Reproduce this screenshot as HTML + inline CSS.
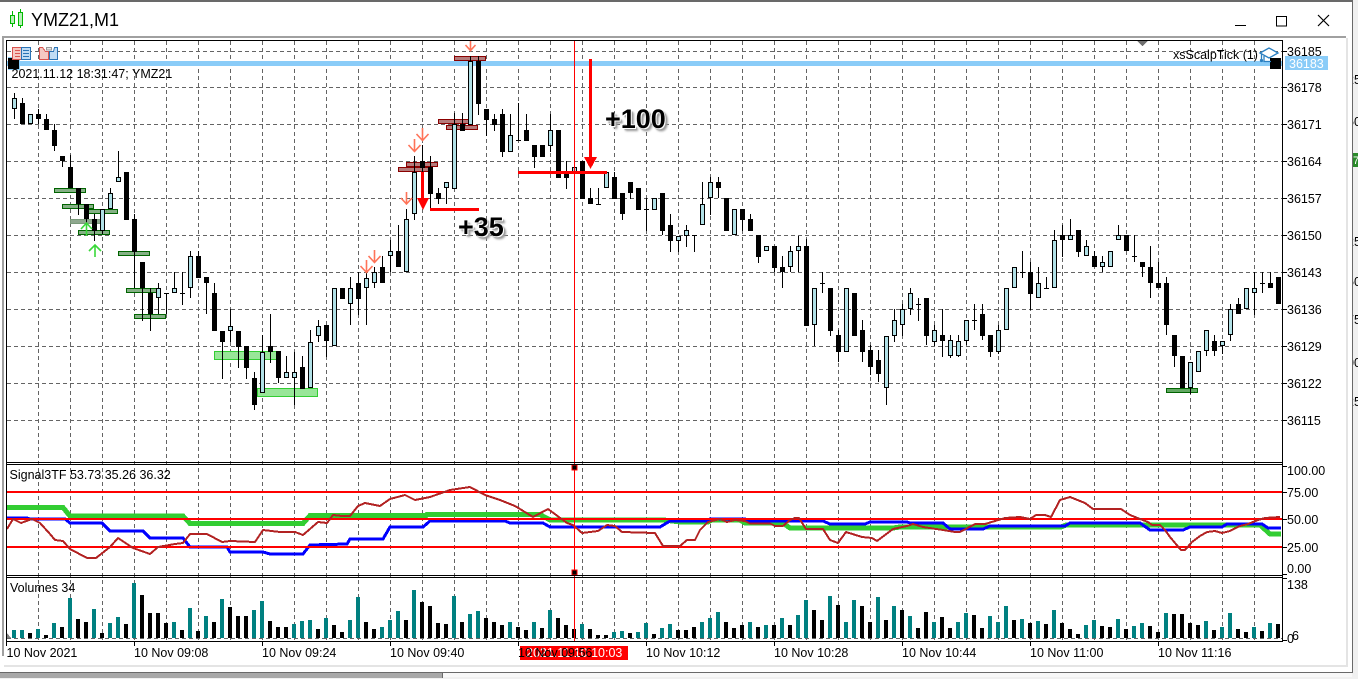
<!DOCTYPE html>
<html><head><meta charset="utf-8"><title>YMZ21,M1</title>
<style>
html,body{margin:0;padding:0;background:#f0f0f0;width:1358px;height:679px;overflow:hidden}
svg{position:absolute;left:0;top:0}
text{font-family:"Liberation Sans",sans-serif;font-size:12.5px;fill:#000}
.big{position:absolute;font:bold 27px/30px "Liberation Sans",sans-serif;color:#000;text-shadow:1px 1px 0 #fff,-1px -1px 0 #fff,3px 3px 2px #999,2px 2px 1px #aaa;white-space:nowrap}
</style></head><body>
<svg width="1358" height="679" viewBox="0 0 1358 679" shape-rendering="crispEdges">
<rect width="1358" height="679" fill="#f0f0f0"/>
<!-- neighbouring window fragments -->
<g fill="#333"><text x="1347" y="84">25</text><text x="1347" y="126">50</text><text x="1347" y="246">25</text><text x="1347" y="286">50</text><text x="1347" y="324">75</text><text x="1347" y="367">00</text><text x="1347" y="406">25</text></g>
<rect x="1353" y="153" width="5" height="14" fill="#2a8a2a"/>
<text x="1353" y="164" style="fill:#fff;font-size:11px">7</text>
<!-- window -->
<rect x="0" y="0" width="1352" height="672" fill="#fff"/>
<rect x="0" y="0" width="1352" height="2" fill="#696969"/>
<rect x="1352" y="0" width="1" height="673" fill="#696969"/>
<rect x="2" y="36" width="1344" height="2" fill="#a0a0a0"/>
<rect x="2" y="36" width="2" height="620" fill="#a0a0a0"/>
<rect x="1346" y="38" width="2" height="628" fill="#e4e4e4"/>
<rect x="4" y="665" width="1344" height="2" fill="#e4e4e4"/>
<rect x="0" y="672" width="1353" height="1" fill="#696969"/>
<rect x="0" y="673" width="442" height="5" fill="#a8a8a8"/>
<rect x="442" y="673" width="1" height="5" fill="#696969"/>
<rect x="443" y="673" width="909" height="4" fill="#f8f8f8"/>
<!-- title bar -->
<g fill="none" stroke="#00b800" stroke-width="1">
<path d="M12.5 11V15M12.5 23V27M20.5 9V12M20.5 25V28"/>
<rect x="10.5" y="15.5" width="4" height="8" fill="#b8f0b8"/>
<rect x="18.5" y="12.5" width="4" height="13" fill="#b8f0b8"/>
</g>
<text x="31" y="26" style="font-size:18px;fill:#000">YMZ21,M1</text>
<path d="M1235 25.5H1246" stroke="#000" stroke-width="1"/>
<rect x="1276.5" y="16.5" width="10" height="9.5" fill="none" stroke="#000" stroke-width="1"/>
<path d="M1318 15L1329 26M1329 15L1318 26" stroke="#000" stroke-width="1.2" shape-rendering="auto"/>
<!-- grid -->
<path fill="none" stroke="#646464" stroke-width="1" stroke-dasharray="4 3" d="M7 51.5H1282M7 87.5H1282M7 124.5H1282M7 161.5H1282M7 198.5H1282M7 235.5H1282M7 272.5H1282M7 309.5H1282M7 346.5H1282M7 383.5H1282M7 420.5H1282M7 638.5H1282
M38.5 41V640M70.5 41V640M102.5 41V640M134.5 41V640M166.5 41V640M198.5 41V640M230.5 41V640M262.5 41V640M294.5 41V640M326.5 41V640M358.5 41V640M390.5 41V640M422.5 41V640M454.5 41V640M486.5 41V640M518.5 41V640M550.5 41V640M582.5 41V640M614.5 41V640M646.5 41V640M678.5 41V640M710.5 41V640M742.5 41V640M774.5 41V640M806.5 41V640M838.5 41V640M870.5 41V640M902.5 41V640M934.5 41V640M966.5 41V640M998.5 41V640M1030.5 41V640M1062.5 41V640M1094.5 41V640M1126.5 41V640M1158.5 41V640M1190.5 41V640M1222.5 41V640M1254.5 41V640"/>
<!-- zones -->
<g fill="#85b085" stroke="#006400" stroke-width="1">
<rect x="54.5" y="188.5" width="31" height="4"/><rect x="62.5" y="204.5" width="31" height="4"/><rect x="86.5" y="209.5" width="31" height="4"/><rect x="70.5" y="219.5" width="31" height="4" stroke="#7a9a7a" fill="#8fa88f"/><rect x="78.5" y="230.5" width="31" height="4"/><rect x="118.5" y="251.5" width="31" height="4"/><rect x="126.5" y="288.5" width="31" height="4"/><rect x="134.5" y="314.5" width="31" height="4"/>
<rect x="1166.5" y="388.5" width="31" height="4" fill="#62a862"/>
</g>
<g fill="#98e698" stroke="#32cd32" stroke-width="1">
<rect x="214.5" y="351.5" width="64" height="8"/><rect x="257.5" y="388.5" width="60" height="8"/>
</g>
<g fill="#b47c7c" stroke="#8b0000" stroke-width="1">
<rect x="454.5" y="56.5" width="31" height="4"/><rect x="438.5" y="119.5" width="31" height="4"/><rect x="446.5" y="125.5" width="31" height="4"/><rect x="406.5" y="162.5" width="31" height="4"/><rect x="398.5" y="167.5" width="31" height="4"/>
</g>
<!-- blue price line -->
<rect x="7" y="61" width="1275" height="5" fill="#8accf8"/>
<!-- candle wicks -->
<path fill="none" stroke="#000" stroke-width="1" d="M14.5 93V119M22.5 98V124M38.5 109V124M46.5 114V130M54.5 124V151M62.5 156V167M70.5 155V188M78.5 188V215M86.5 204V225M94.5 214V241M102.5 209V234M110.5 188V209M118.5 151V182M134.5 214V288M142.5 262V321M150.5 288V331M158.5 283V314M166.5 293V314M174.5 272V293M182.5 272V305M190.5 251V298M198.5 251V278M206.5 277V314M214.5 283V331M222.5 331V379M230.5 309V342M238.5 331V368M246.5 346V379M254.5 372V410M262.5 335V393M270.5 314V363M278.5 351V383M286.5 356V378M294.5 352V405M302.5 356V389M310.5 330V388M318.5 320V342M326.5 325V357M350.5 277V325M358.5 272V315M366.5 272V325M374.5 267V288M382.5 256V283M390.5 240V272M398.5 225V267M406.5 209V272M414.5 156V220M422.5 145V180M430.5 156V209M438.5 188V204M446.5 182V204M454.5 113V189M462.5 113V131M470.5 56V125M478.5 56V115M486.5 109V136M494.5 114V131M502.5 109V157M510.5 114V152M518.5 103V140M526.5 114V141M534.5 145V168M550.5 114V152M566.5 161V189M574.5 156V199M590.5 188V204M598.5 188V204M614.5 172V199M622.5 193V220M630.5 182V199M646.5 198V231M662.5 193V235M670.5 214V252M678.5 236V252M686.5 225V247M694.5 235V252M702.5 182V225M710.5 177V215M718.5 177V198M742.5 209V231M750.5 214V231M758.5 235V263M774.5 246V272M782.5 256V288M790.5 246V272M798.5 236V272M806.5 239V326M814.5 288V346M822.5 272V293M830.5 288V336M838.5 330V362M862.5 320V362M870.5 345V375M878.5 350V382M886.5 336V405M894.5 309V342M902.5 304V336M910.5 288V315M918.5 298V321M926.5 298V345M934.5 325V346M942.5 309V357M950.5 335V358M958.5 335V357M966.5 320V345M974.5 304V330M982.5 304V340M990.5 335V357M998.5 325V354M1014.5 267V288M1022.5 251V278M1030.5 262V310M1038.5 267V298M1046.5 277V288M1054.5 230V288M1062.5 225V257M1070.5 219V240M1078.5 230V257M1086.5 240V256M1094.5 251V267M1102.5 256V272M1118.5 225V240M1134.5 235V262M1142.5 262V277M1150.5 246V298M1158.5 262V288M1166.5 277V335M1174.5 335V367M1190.5 362V394M1206.5 330V356M1214.5 335V356M1222.5 341V354M1230.5 304V341M1238.5 298V314M1254.5 272V315M1262.5 272V293M1270.5 272V288
M164 293.5h5M180 293.5h5M516 140.5h5M596 204.5h5M644 209.5h5M692 235.5h5M820 283.5h5M916 304.5h5M972 320.5h5M1020 272.5h5M1044 288.5h5M1132 256.5h5M1260 283.5h5"/>
<!-- bear bodies -->
<path fill="#000" d="M20 103h5v21h-5zM36 114h5v5h-5zM44 119h5v11h-5zM52 130h5v16h-5zM60 156h5v5h-5zM68 167h5v21h-5zM76 188h5v16h-5zM84 204h5v15h-5zM92 219h5v12h-5zM124 172h5v48h-5zM132 219h5v33h-5zM140 262h5v26h-5zM148 293h5v21h-5zM196 256h5v22h-5zM204 277h5v6h-5zM212 293h5v38h-5zM220 331h5v11h-5zM236 331h5v16h-5zM244 346h5v22h-5zM252 378h5v27h-5zM268 346h5v6h-5zM276 351h5v27h-5zM300 367h5v22h-5zM324 325h5v16h-5zM340 288h5v11h-5zM356 283h5v16h-5zM380 267h5v16h-5zM396 251h5v16h-5zM420 161h5v7h-5zM428 167h5v27h-5zM436 193h5v6h-5zM460 124h5v7h-5zM476 61h5v43h-5zM484 109h5v11h-5zM492 119h5v6h-5zM500 114h5v38h-5zM524 130h5v11h-5zM532 145h5v12h-5zM540 145h5v12h-5zM556 130h5v48h-5zM564 172h5v6h-5zM580 161h5v38h-5zM588 198h5v6h-5zM612 177h5v22h-5zM620 193h5v21h-5zM628 182h5v11h-5zM636 188h5v22h-5zM660 193h5v38h-5zM668 225h5v16h-5zM716 182h5v6h-5zM724 198h5v33h-5zM740 209h5v11h-5zM748 219h5v12h-5zM756 235h5v22h-5zM772 246h5v22h-5zM780 267h5v5h-5zM804 246h5v80h-5zM828 288h5v43h-5zM836 335h5v17h-5zM852 293h5v43h-5zM860 330h5v22h-5zM868 350h5v17h-5zM876 360h5v14h-5zM924 298h5v38h-5zM940 335h5v6h-5zM980 314h5v22h-5zM988 335h5v17h-5zM1028 272h5v22h-5zM1060 235h5v5h-5zM1076 230h5v22h-5zM1092 256h5v11h-5zM1124 235h5v16h-5zM1140 262h5v5h-5zM1148 267h5v16h-5zM1156 283h5v5h-5zM1164 283h5v42h-5zM1172 335h5v21h-5zM1180 356h5v32h-5zM1212 341h5v10h-5zM1236 304h5v10h-5zM1268 283h5v5h-5zM1276 277h5v27h-5z"/>
<!-- bull bodies -->
<path fill="#b0e0e6" stroke="#000" stroke-width="1" d="M12.5 98.5h4v10h-4zM28.5 114.5h4v9h-4zM100.5 209.5h4v21h-4zM108.5 193.5h4v15h-4zM116.5 177.5h4v4h-4zM156.5 288.5h4v9h-4zM172.5 288.5h4v4h-4zM188.5 256.5h4v31h-4zM228.5 326.5h4v4h-4zM260.5 352.5h4v40h-4zM284.5 372.5h4v5h-4zM292.5 372.5h4v5h-4zM308.5 342.5h4v45h-4zM316.5 326.5h4v9h-4zM332.5 288.5h4v57h-4zM348.5 288.5h4v15h-4zM364.5 278.5h4v9h-4zM372.5 272.5h4v10h-4zM388.5 251.5h4v4h-4zM404.5 219.5h4v52h-4zM412.5 172.5h4v41h-4zM444.5 182.5h4v5h-4zM452.5 124.5h4v64h-4zM468.5 61.5h4v63h-4zM508.5 135.5h4v16h-4zM548.5 130.5h4v15h-4zM572.5 167.5h4v5h-4zM604.5 172.5h4v15h-4zM652.5 198.5h4v11h-4zM676.5 236.5h4v4h-4zM684.5 230.5h4v5h-4zM700.5 204.5h4v20h-4zM708.5 182.5h4v15h-4zM732.5 209.5h4v25h-4zM764.5 246.5h4v4h-4zM788.5 251.5h4v15h-4zM796.5 246.5h4v4h-4zM812.5 288.5h4v36h-4zM844.5 288.5h4v63h-4zM884.5 336.5h4v51h-4zM892.5 320.5h4v15h-4zM900.5 309.5h4v15h-4zM908.5 293.5h4v15h-4zM932.5 330.5h4v11h-4zM948.5 340.5h4v15h-4zM956.5 341.5h4v14h-4zM964.5 320.5h4v20h-4zM996.5 330.5h4v21h-4zM1004.5 288.5h4v41h-4zM1012.5 267.5h4v20h-4zM1036.5 283.5h4v14h-4zM1052.5 240.5h4v47h-4zM1068.5 235.5h4v4h-4zM1084.5 246.5h4v9h-4zM1100.5 262.5h4v4h-4zM1108.5 251.5h4v15h-4zM1116.5 235.5h4v4h-4zM1188.5 362.5h4v25h-4zM1196.5 351.5h4v20h-4zM1204.5 330.5h4v20h-4zM1220.5 341.5h4v4h-4zM1228.5 309.5h4v25h-4zM1244.5 288.5h4v20h-4zM1252.5 288.5h4v4h-4z"/>
<path fill="none" stroke="#000" stroke-width="1" d="M1044 288.5h5"/>
<!-- trade marks: arrows -->
<g fill="none" stroke="#ff7358" stroke-width="1.6" shape-rendering="auto">
<path d="M470.5 40V50M465.5 45L470.5 50.5L475.5 45"/>
<path d="M422.5 128V140M416.5 134L422.5 140.5L428.5 134"/>
<path d="M414.5 139V151M408.5 145L414.5 151.5L420.5 145"/>
<path d="M406.5 192V204M401 198L406.5 204L412 198"/>
<path d="M374.5 250V262M368.5 256L374.5 262.5L380.5 256"/>
<path d="M366.5 260V272M360.5 266L366.5 272.5L372.5 266"/>
</g>
<g fill="none" stroke="#3ad83a" stroke-width="1.6" shape-rendering="auto">
<path d="M86.5 236V224M81 229L86.5 223L92 229"/>
<path d="M95 257V245M89 251L95 245L101 251"/>
</g>
<!-- red drawings -->
<rect x="589" y="59" width="3" height="98" fill="#f00"/>
<path d="M584 157H597L590.500 169z" fill="#f00"/>
<rect x="518" y="171" width="89" height="3" fill="#f00"/>
<rect x="421" y="172" width="3" height="27" fill="#f00"/>
<path d="M417 198H429L423 210z" fill="#f00"/>
<rect x="430" y="208" width="49" height="3" fill="#f00"/>
<!-- signal lines -->
<polyline fill="none" stroke="#32cd32" stroke-width="5" points="7,507.500 63,507.500 70,516 183,516 190,523.500 303,523.500 310,515.500 426,515.500 427,514.500 540,514.500 550,520 664,520 680,522 708,522 712,520 740,520 745,523 783,523 790,528 893,528 900,527 1061,527 1066,525 1260,525 1270,534 1281,534"/>
<polyline fill="none" stroke="#0000ff" stroke-width="3" points="7,518 27,518 30,519 65,519 70,523 102,523 110,531 143,531 150,538 183,538 190,547 227,547 230,552 263,552 270,554 303,554 310,545 347,544 350,539 383,539 390,527 423,527 430,521 505,521 510,523 543,523 550,527 660,527 670,521 708,521 710,519 745,519 748,521 823,521 830,524 865,524 870,522 907,522 910,523 943,523 950,529 983,529 990,526 1065,526 1070,523 1140,523 1150,530 1183,530 1190,527 1222,527 1227,524 1262,524 1268,528 1281,528"/>
<g fill="#f00"><rect x="7" y="491" width="1275" height="2"/><rect x="7" y="518" width="1275" height="2"/><rect x="7" y="546" width="1275" height="2"/></g>
<polyline fill="none" stroke="#b22222" stroke-width="2" points="7,529 13,519 21,523 32,519 40,523 50,534 55,540 63,541 70,549 87,558 96,558 110,547 118,538 133,548 150,554 158,547 175,544 183,543 190,534 207,534 222,542 230,541 255,542 263,530 280,532 295,532 303,535 318,522 327,523 333,515 342,516 350,516 358,506 365,503 380,506 390,499 405,495 415,500 430,497 450,490 470,487 485,495 500,500 515,506 520,509 533,517 548,509 567,523 573,525 582,533 598,531 607,525 615,526 622,532 655,533 663,546 680,546 687,540 695,540 700,530 708,522 720,519 727,522 735,520 745,521 750,523.500 770,523.500 775,526 783,526 790,520 795,518 799,518 806,529 823,529 830,540 838,543 846,532 862,537 872,538 877,541 893,529 907,526 913,524 923,527 943,530 955,532 960,532 975,524 985,524 1005,518 1020,517 1030,519 1036,515 1045,515 1051,517 1060,500 1070,497 1085,503 1093,509 1121,509 1130,515 1140,519 1148,522 1152,525 1160,525 1165,530 1170,537 1181,550 1185,550 1192,542 1200,536 1207,532 1215,531 1222,533 1230,531 1240,526 1248,524 1258,520 1265,518 1280,517"/>
<!-- volumes -->
<path fill="none" stroke="#008080" stroke-width="4" d="M14 630V638M22 630V638M38 629V638M54 623V638M70 598V638M94 609V638M110 623V638M118 617V638M134 583V638M174 622V638M190 608V638M206 616V638M222 599V638M254 610V638M262 601V638M294 624V638M302 621V638M310 620V638M326 618V638M350 620V638M358 597V638M382 627V638M390 620V638M398 611V638M414 590V638M454 596V638M470 614V638M478 611V638M510 622V638M534 622V638M550 610V638M582 624V638M614 632V638M622 631V638M638 632V638M646 623V638M662 628V638M670 624V638M702 622V638M710 618V638M718 612V638M750 622V638M766 625V638M782 618V638M798 615V638M806 600V638M830 596V638M846 622V638M854 600V638M878 597V638M894 606V638M910 616V638M934 622V638M958 622V638M966 613V638M990 616V638M998 622V638M1006 606V638M1022 619V638M1038 621V638M1054 610V638M1086 625V638M1094 620V638M1118 619V638M1134 626V638M1142 623V638M1166 613V638M1206 621V638M1222 627V638M1230 613V638M1254 627V638M1270 623V638"/>
<path fill="none" stroke="#000" stroke-width="4" d="M30 633V638M46 635V638M62 627V638M78 619V638M86 622V638M102 633V638M126 624V638M142 595V638M150 613V638M158 613V638M166 623V638M182 630V638M198 631V638M214 622V638M230 607V638M238 616V638M246 616V638M270 621V638M278 627V638M286 627V638M318 629V638M334 625V638M342 632V638M366 622V638M374 629V638M406 620V638M422 602V638M430 606V638M438 623V638M446 624V638M462 622V638M486 618V638M494 622V638M502 625V638M518 627V638M526 630V638M542 628V638M558 618V638M566 625V638M574 629V638M590 629V638M598 635V638M606 635V638M630 633V638M654 634V638M678 630V638M686 630V638M694 627V638M726 622V638M734 628V638M742 625V638M758 627V638M774 625V638M790 625V638M814 610V638M822 620V638M838 605V638M862 606V638M870 622V638M886 620V638M902 610V638M918 628V638M926 612V638M942 617V638M950 628V638M974 615V638M982 628V638M1014 620V638M1030 623V638M1046 624V638M1062 623V638M1070 629V638M1078 634V638M1102 626V638M1110 627V638M1126 629V638M1150 626V638M1158 632V638M1174 614V638M1182 614V638M1190 623V638M1198 625V638M1214 630V638M1238 629V638M1246 632V638M1262 631V638M1278 624V638"/>
<path d="M7 633L11 638H7z" fill="#808080"/>
<!-- crosshair -->
<rect x="574" y="41" width="1" height="600" fill="#f00"/>
<rect x="572" y="465" width="5" height="5" fill="#000" stroke="#f00" stroke-width="1"/>
<rect x="572" y="570" width="5" height="5" fill="#000" stroke="#f00" stroke-width="1"/>
<!-- chart borders -->
<g fill="#000">
<rect x="6" y="40" width="1277" height="1"/><rect x="6" y="40" width="1" height="602"/><rect x="1282" y="40" width="1" height="602"/>
<rect x="6" y="462" width="1277" height="1"/><rect x="6" y="464" width="1277" height="1"/>
<rect x="6" y="575" width="1277" height="1"/><rect x="6" y="577" width="1277" height="1"/>
<rect x="6" y="641" width="1277" height="1"/>
</g>
<path d="M1137 41H1148L1142.500 46z" fill="#707070"/>
<!-- end squares -->
<rect x="8" y="57" width="12" height="13" fill="#8accf8"/><rect x="8" y="58" width="11" height="11" fill="#000"/>
<rect x="1270" y="58" width="11" height="11" fill="#000"/>
<!-- top-left icons -->
<rect x="12.500" y="47.500" width="9" height="12" fill="#f6c8c2" stroke="#d9534f"/>
<rect x="21.500" y="47.500" width="9" height="12" fill="#c0dcf4" stroke="#2a73b5"/>
<path d="M15 50.500h5M15 53.500h5M15 56.500h5" stroke="#d9534f"/><path d="M23 50.500h6M23 53.500h6M23 56.500h6" stroke="#2a73b5"/>
<path d="M39.500 47.500h3l3 4h3v8h-9z" fill="#f6c8c2" stroke="#d9534f"/>
<path d="M57.500 47.500h-3l-1 4h-4v8h8z" fill="#c0dcf4" stroke="#2a73b5"/>
<rect x="46.500" y="47.500" width="5" height="2.500" fill="#e8e8e8" stroke="#999"/>
<!-- cap icon -->
<g shape-rendering="auto" fill="none" stroke="#2a7fc1" stroke-width="1.3">
<path d="M1260 53L1269 48L1278 53L1269 58z" fill="#fff"/>
<path d="M1264 56V61.500H1271M1261.500 54V60"/>
<circle cx="1261.500" cy="60.500" r="1" fill="#2a7fc1"/>
</g>
<!-- text labels -->
<text x="11.500" y="78">2021.11.12 18:31:47; YMZ21</text>
<text x="9.500" y="479">Signal3TF 53.73 35.26 36.32</text>
<text x="10" y="592">Volumes 34</text>
<text x="1173" y="59">xsScalpTick (1)</text>
<!-- y axis -->
<path stroke="#000" stroke-width="1" d="M1283 51.500h4M1283 87.500h4M1283 124.500h4M1283 161.500h4M1283 198.500h4M1283 235.500h4M1283 272.500h4M1283 309.500h4M1283 346.500h4M1283 383.500h4M1283 420.500h4M1283 466.500h4M1283 492.500h4M1283 519.500h4M1283 547.500h4M1283 574.500h4M1283 578.500h4M1283 640.500h4"/>
<text x="1287" y="56">36185</text><text x="1287" y="92">36178</text><text x="1287" y="129">36171</text><text x="1287" y="166">36164</text><text x="1287" y="203">36157</text><text x="1287" y="240">36150</text><text x="1287" y="277">36143</text><text x="1287" y="314">36136</text><text x="1287" y="351">36129</text><text x="1287" y="388">36122</text><text x="1287" y="425">36115</text>
<rect x="1285" y="56" width="43" height="14" fill="#8accf8"/>
<text x="1289" y="68" style="fill:#fff">36183</text>
<text x="1287" y="475">100.00</text><text x="1287" y="497">75.00</text><text x="1287" y="524">50.00</text><text x="1287" y="552">25.00</text><text x="1287" y="573">0.00</text>
<text x="1287" y="589">138</text><text x="1292" y="640">6</text><text x="1287" y="643">0</text>
<!-- time axis -->
<path stroke="#000" stroke-width="1" d="M6.500 642v4M134.500 642v4M262.500 642v4M390.500 642v4M518.500 642v4M646.500 642v4M774.500 642v4M902.500 642v4M1030.500 642v4M1158.500 642v4"/>
<rect x="520" y="646" width="108" height="14" fill="#f00"/>
<text x="526" y="657" style="fill:#fff">2021.11.10 10:03</text>
<text x="6.500" y="657">10 Nov 2021</text><text x="134" y="657">10 Nov 09:08</text><text x="262" y="657">10 Nov 09:24</text><text x="390" y="657">10 Nov 09:40</text><text x="518" y="657">10 Nov 09:56</text><text x="646" y="657">10 Nov 10:12</text><text x="774" y="657">10 Nov 10:28</text><text x="902" y="657">10 Nov 10:44</text><text x="1030" y="657">10 Nov 11:00</text><text x="1158" y="657">10 Nov 11:16</text>
</svg>
<div class="big" style="left:605px;top:104px">+100</div>
<div class="big" style="left:458px;top:212px">+35</div>
</body></html>
